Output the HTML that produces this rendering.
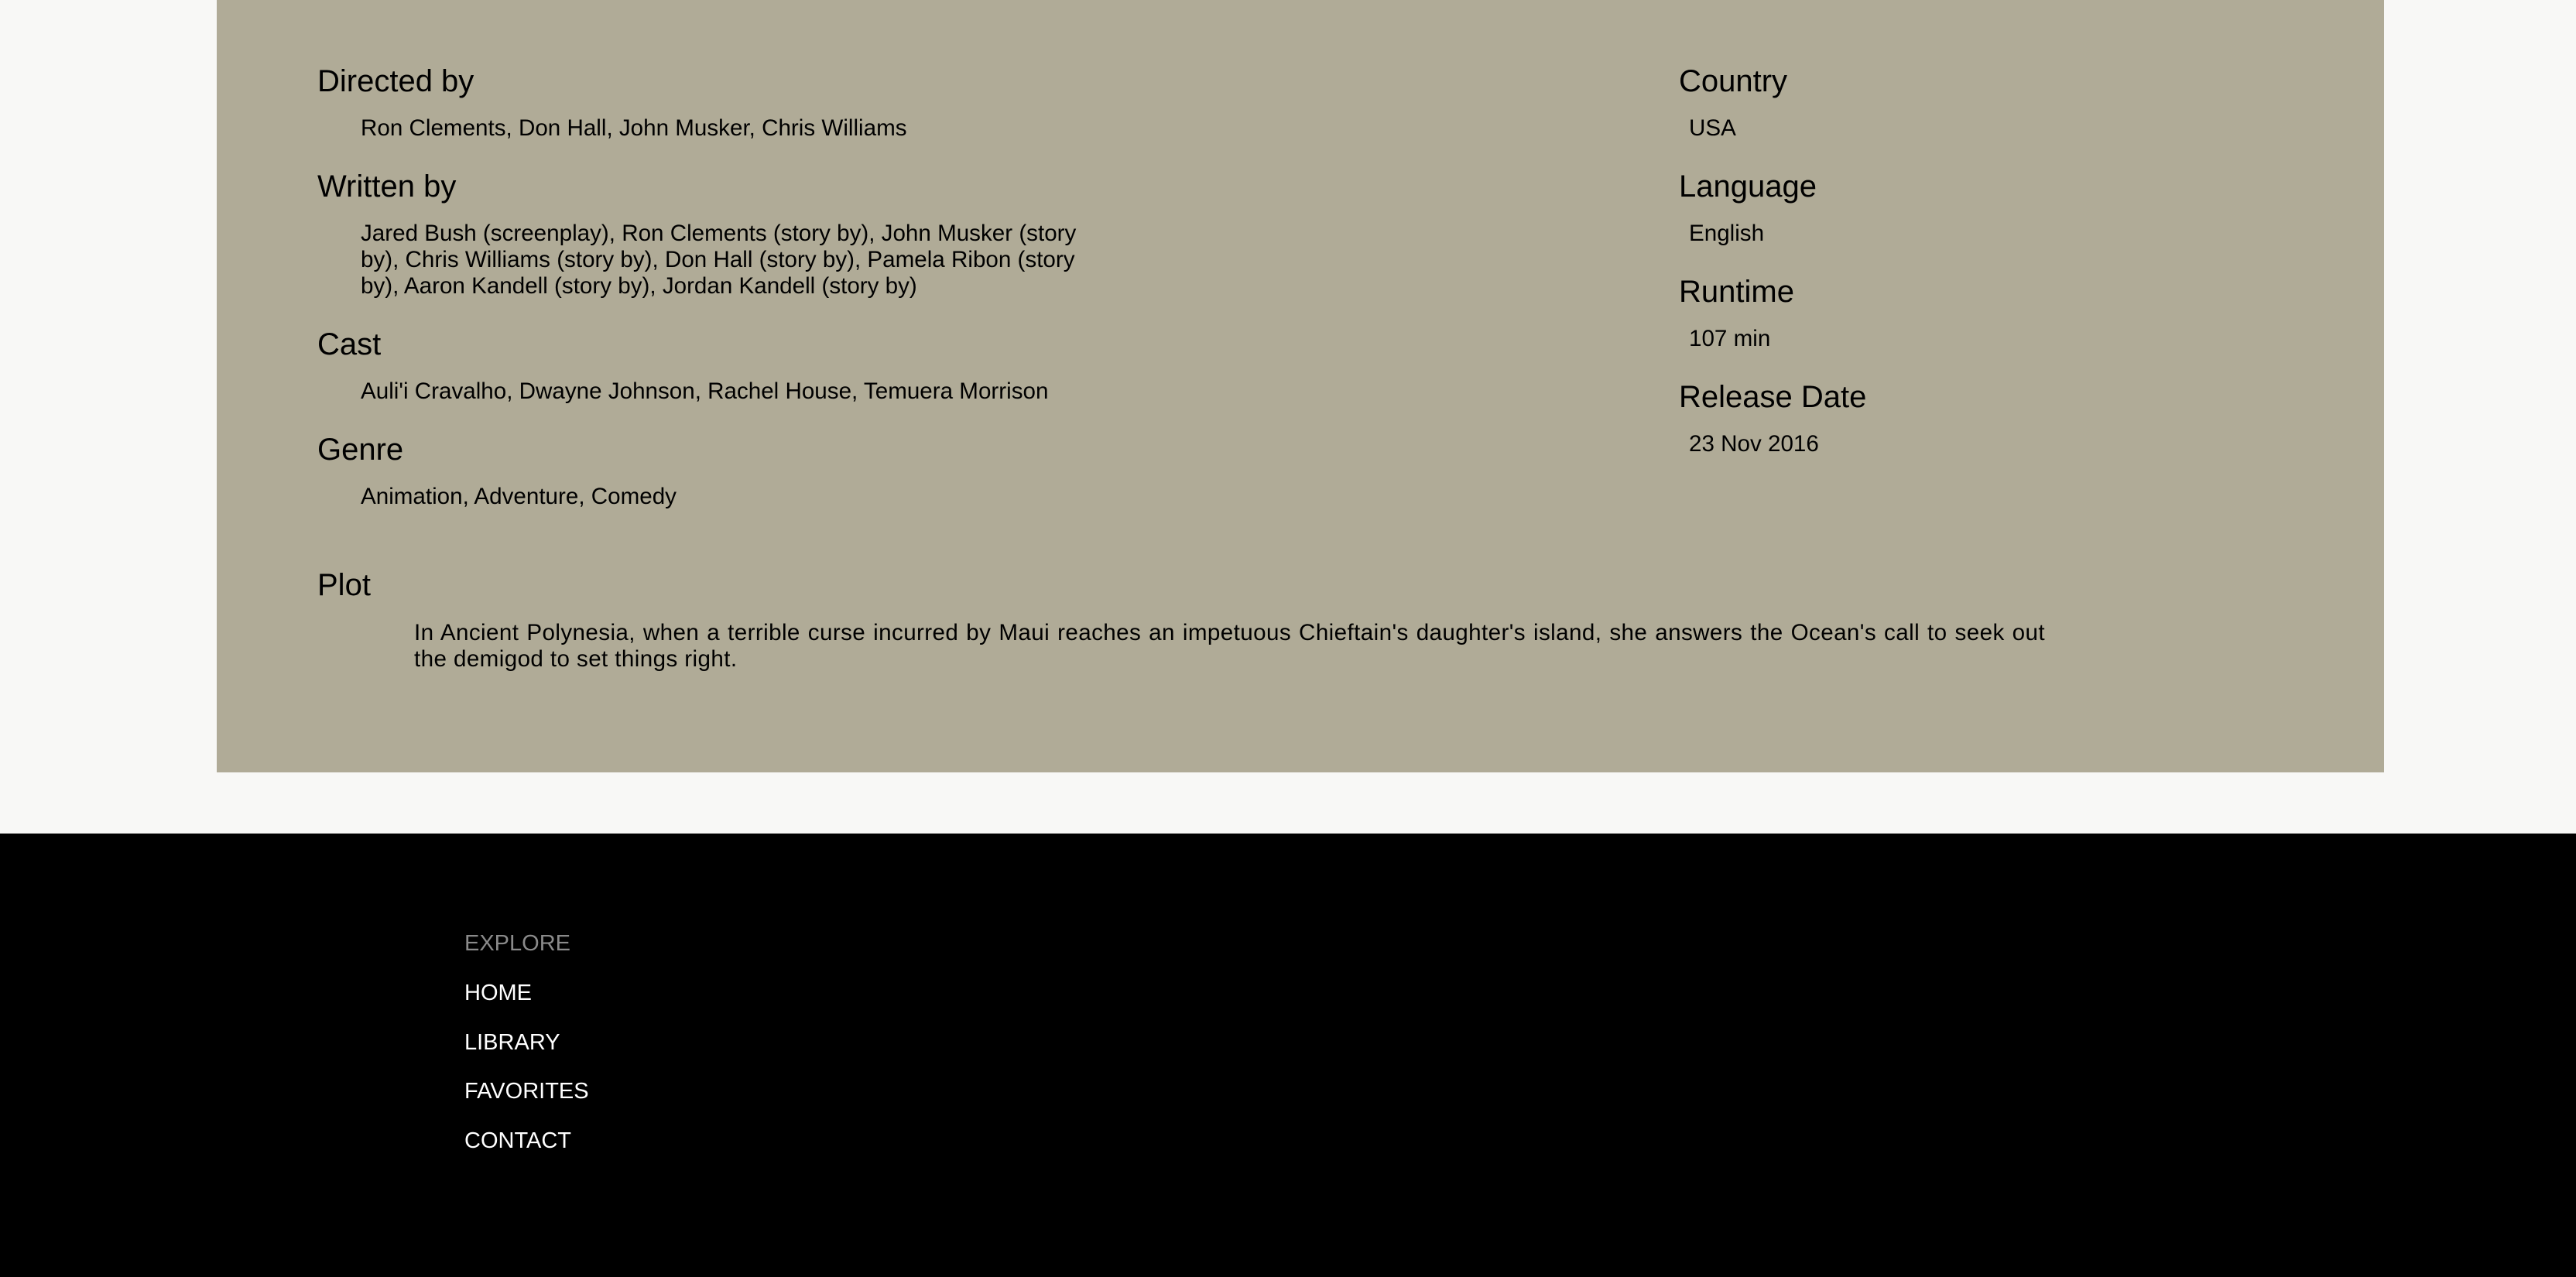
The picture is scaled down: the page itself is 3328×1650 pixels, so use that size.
<!DOCTYPE html>
<html><head><meta charset="utf-8"><style>
html,body{margin:0;padding:0;}
body{width:3328px;height:1650px;background:#f8f8f6;position:relative;overflow:hidden;font-family:"Liberation Sans",Arial,sans-serif;color:#000;}
.panel{position:absolute;left:280px;top:0;width:2800px;height:998px;background:#b0ab97;}
.a{position:absolute;white-space:nowrap;}
.h{font-size:40px;line-height:50px;}
.t{font-size:29.6px;line-height:34px;}
.foot{position:absolute;left:0;top:1077px;width:3328px;height:573px;background:#000;}
.f{position:absolute;left:600px;font-size:29px;line-height:40px;color:#fff;}
</style></head><body>
<div class="panel"></div>
<div class="a h" style="left:410px;top:80px">Directed by</div>
<div class="a t" style="left:466px;top:149px">Ron Clements, Don Hall, John Musker, Chris Williams</div>
<div class="a h" style="left:410px;top:216px">Written by</div>
<div class="a t" style="left:466px;top:285px">Jared Bush (screenplay), Ron Clements (story by), John Musker (story<br>by), Chris Williams (story by), Don Hall (story by), Pamela Ribon (story<br>by), Aaron Kandell (story by), Jordan Kandell (story by)</div>
<div class="a h" style="left:410px;top:420px">Cast</div>
<div class="a t" style="left:466px;top:489px">Auli'i Cravalho, Dwayne Johnson, Rachel House, Temuera Morrison</div>
<div class="a h" style="left:410px;top:556px">Genre</div>
<div class="a t" style="left:466px;top:625px">Animation, Adventure, Comedy</div>

<div class="a h" style="left:2169px;top:80px">Country</div>
<div class="a t" style="left:2182px;top:149px">USA</div>
<div class="a h" style="left:2169px;top:216px">Language</div>
<div class="a t" style="left:2182px;top:285px">English</div>
<div class="a h" style="left:2169px;top:352px">Runtime</div>
<div class="a t" style="left:2182px;top:421px">107 min</div>
<div class="a h" style="left:2169px;top:488px">Release Date</div>
<div class="a t" style="left:2182px;top:557px">23 Nov 2016</div>

<div class="a h" style="left:410px;top:731px">Plot</div>
<div class="t" style="position:absolute;left:535px;top:801px;width:2107px;letter-spacing:0.4px;">
<div style="text-align:justify;text-align-last:justify;white-space:nowrap;">In Ancient Polynesia, when a terrible curse incurred by Maui reaches an impetuous Chieftain's daughter's island, she answers the Ocean's call to seek out</div>
<div>the demigod to set things right.</div>
</div>

<div class="foot"></div>
<div class="f" style="top:1199px;color:#8a8a8a">EXPLORE</div>
<div class="f" style="top:1263px">HOME</div>
<div class="f" style="top:1327px">LIBRARY</div>
<div class="f" style="top:1390px">FAVORITES</div>
<div class="f" style="top:1454px">CONTACT</div>
</body></html>
